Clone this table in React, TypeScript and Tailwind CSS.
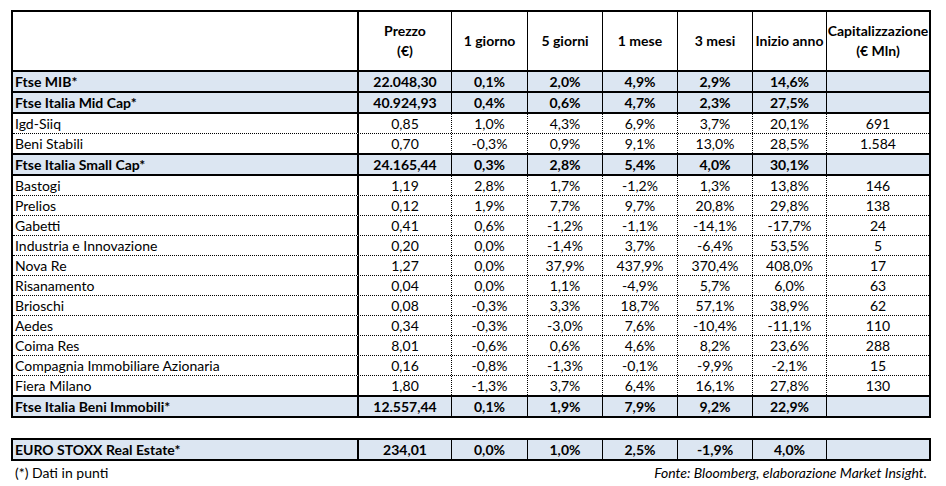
import React from "react";

type Kind = "header" | "summary" | "plain";
type Bottom = "thick" | "dotted" | "none";

interface Row {
  name: string;
  values: string[];
  kind: Kind;
  bottom: Bottom;
}

const colW = [
  "w-[346px]",
  "w-[93px]",
  "w-[76px]",
  "w-[75px]",
  "w-[75px]",
  "w-[75px]",
  "w-[74px]",
  "w-[102px]",
];

const rows: Row[] = [
  { name: "Ftse MIB*", values: ["22.048,30", "0,1%", "2,0%", "4,9%", "2,9%", "14,6%", ""], kind: "summary", bottom: "thick" },
  { name: "Ftse Italia Mid Cap*", values: ["40.924,93", "0,4%", "0,6%", "4,7%", "2,3%", "27,5%", ""], kind: "summary", bottom: "thick" },
  { name: "Igd-Siiq", values: ["0,85", "1,0%", "4,3%", "6,9%", "3,7%", "20,1%", "691"], kind: "plain", bottom: "dotted" },
  { name: "Beni Stabili", values: ["0,70", "-0,3%", "0,9%", "9,1%", "13,0%", "28,5%", "1.584"], kind: "plain", bottom: "thick" },
  { name: "Ftse Italia Small Cap*", values: ["24.165,44", "0,3%", "2,8%", "5,4%", "4,0%", "30,1%", ""], kind: "summary", bottom: "thick" },
  { name: "Bastogi", values: ["1,19", "2,8%", "1,7%", "-1,2%", "1,3%", "13,8%", "146"], kind: "plain", bottom: "dotted" },
  { name: "Prelios", values: ["0,12", "1,9%", "7,7%", "9,7%", "20,8%", "29,8%", "138"], kind: "plain", bottom: "dotted" },
  { name: "Gabetti", values: ["0,41", "0,6%", "-1,2%", "-1,1%", "-14,1%", "-17,7%", "24"], kind: "plain", bottom: "dotted" },
  { name: "Industria e Innovazione", values: ["0,20", "0,0%", "-1,4%", "3,7%", "-6,4%", "53,5%", "5"], kind: "plain", bottom: "dotted" },
  { name: "Nova Re", values: ["1,27", "0,0%", "37,9%", "437,9%", "370,4%", "408,0%", "17"], kind: "plain", bottom: "dotted" },
  { name: "Risanamento", values: ["0,04", "0,0%", "1,1%", "-4,9%", "5,7%", "6,0%", "63"], kind: "plain", bottom: "dotted" },
  { name: "Brioschi", values: ["0,08", "-0,3%", "3,3%", "18,7%", "57,1%", "38,9%", "62"], kind: "plain", bottom: "dotted" },
  { name: "Aedes", values: ["0,34", "-0,3%", "-3,0%", "7,6%", "-10,4%", "-11,1%", "110"], kind: "plain", bottom: "dotted" },
  { name: "Coima Res", values: ["8,01", "-0,6%", "0,6%", "4,6%", "8,2%", "23,6%", "288"], kind: "plain", bottom: "dotted" },
  { name: "Compagnia Immobiliare Azionaria", values: ["0,16", "-0,8%", "-1,3%", "-0,1%", "-9,9%", "-2,1%", "15"], kind: "plain", bottom: "dotted" },
  { name: "Fiera Milano", values: ["1,80", "-1,3%", "3,7%", "6,4%", "16,1%", "27,8%", "130"], kind: "plain", bottom: "thick" },
  { name: "Ftse Italia Beni Immobili*", values: ["12.557,44", "0,1%", "1,9%", "7,9%", "9,2%", "22,9%", ""], kind: "summary", bottom: "none" },
];

function rowClass(r: Row): string {
  const base = "flex";
  const bg = r.kind === "summary" ? " bg-[#dce6f2] font-bold" : " bg-white";
  if (r.bottom === "thick") return base + bg + " h-[21px] border-b-2 border-solid border-black";
  if (r.bottom === "dotted") return base + bg + " h-[20px] border-b border-dotted border-black";
  return base + bg + " h-[19px]";
}

function cellBorder(i: number, kind: Kind): string {
  if (i === 7) return "";
  if (i === 0) return " border-r-2 border-solid border-black";
  if (kind === "plain") return " border-r border-dotted border-black";
  return " border-r border-solid border-black";
}

function DataRow({ r }: { r: Row }) {
  return (
    <div className={rowClass(r)}>
      <div className={colW[0] + " h-full flex items-center pl-[2px] whitespace-nowrap" + cellBorder(0, r.kind)}>
        {r.name}
      </div>
      {r.values.map((v, idx) => (
        <div
          key={idx}
          className={colW[idx + 1] + " h-full flex items-center justify-center whitespace-nowrap" + cellBorder(idx + 1, r.kind)}
        >
          {v}
        </div>
      ))}
    </div>
  );
}

const headers: React.ReactNode[] = [
  <>
    Prezzo
    <br />
    (€)
  </>,
  "1 giorno",
  "5 giorni",
  "1 mese",
  "3 mesi",
  "Inizio anno",
  <>
    Capitalizzazione
    <br />
    (€ Mln)
  </>,
];

export default function App() {
  return (
    <div
      className="w-[946px] h-[486px] bg-white text-black pl-[11px] pt-[10px] text-[14px] leading-[20px]"
      style={{ fontFamily: "Lato, 'Open Sans', sans-serif" }}
    >
      <div className="w-[920px] border-2 border-solid border-black">
        <div className="flex h-[60px] border-b-2 border-solid border-black font-bold">
          <div className={colW[0] + " h-full" + cellBorder(0, "header")} />
          {headers.map((h, idx) => (
            <div
              key={idx}
              className={colW[idx + 1] + " h-full flex items-center justify-center text-center whitespace-nowrap" + cellBorder(idx + 1, "header")}
            >
              <div>{h}</div>
            </div>
          ))}
        </div>
        {rows.map((r, i) => (
          <DataRow key={i} r={r} />
        ))}
      </div>

      <div className="w-[920px] mt-[20px] border-2 border-solid border-black">
        <DataRow
          r={{
            name: "EURO STOXX Real Estate*",
            values: ["234,01", "0,0%", "1,0%", "2,5%", "-1,9%", "4,0%", ""],
            kind: "summary",
            bottom: "none",
          }}
        />
      </div>

      <div className="w-[916px] flex justify-between mt-[2px] pl-[4px]">
        <span>(*) Dati in punti</span>
        <span className="italic">Fonte: Bloomberg, elaborazione Market Insight.</span>
      </div>
    </div>
  );
}
